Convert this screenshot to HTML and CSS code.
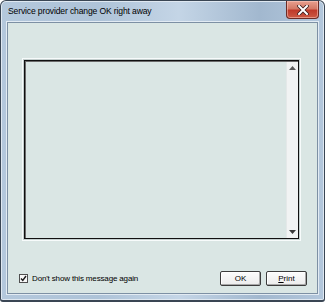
FILE: index.html
```html
<!DOCTYPE html>
<html lang="en">
<head>
    <meta charset="UTF-8">
    <title>Service provider change OK right away</title>
    <link rel="stylesheet" href="styles.css">
</head>
<body>
    <div class="window">
        <div class="titlebar">
            <span class="title">Service provider change OK right away</span>
            <div class="close-btn">
                <svg width="12" height="10" viewBox="0 0 12 10">
                    <path d="M2 1 L10 9 M10 1 L2 9" stroke="#3a1c1c" stroke-width="3.6" stroke-linecap="square"/>
                    <path d="M2 1 L10 9 M10 1 L2 9" stroke="#ffffff" stroke-width="2" stroke-linecap="square"/>
                </svg>
            </div>
        </div>

        <div class="client">
            <div class="textbox">
                <div class="textbox-inner">
                    <div class="text-area"></div>
                    <div class="scrollbar">
                        <div class="scroll-btn">
                            <svg width="7" height="4" viewBox="0 0 7 4"><path d="M0 4 L3.5 0 L7 4 Z" fill="#5a5a5a"/></svg>
                        </div>
                        <div class="scroll-track"></div>
                        <div class="scroll-btn">
                            <svg width="7" height="4" viewBox="0 0 7 4"><path d="M0 0 L3.5 4 L7 0 Z" fill="#3a3a3a"/></svg>
                        </div>
                    </div>
                </div>
            </div>

            <div class="footer">
                <label class="check-label">
                    <span class="checkbox">
                        <svg width="7" height="7" viewBox="0 0 7 7"><path d="M1 3.5 L2.8 5.5 L6 1" stroke="#1a1a1a" stroke-width="1.4" fill="none"/></svg>
                    </span>
                    Don't show this message again
                </label>
                <div class="buttons">
                    <button class="btn">OK</button>
                    <button class="btn"><u>P</u>rint</button>
                </div>
            </div>
        </div>
    </div>
</body>
</html>
```

FILE: styles.css
```css
* {
    box-sizing: border-box;
}

body {
    margin: 0;
    width: 325px;
    height: 302px;
    background: #ffffff;
    font-family: 'Liberation Sans', Arial, sans-serif;
    overflow: hidden;
}

.window {
    width: 325px;
    height: 302px;
    display: flex;
    flex-direction: column;
    border: 1px solid #3a4654;
    border-bottom-width: 2px;
    border-radius: 6px 6px 3px 3px;
    background: linear-gradient(90deg, #b4c8dc 0%, #aec3d8 30%, #c4d5e6 55%, #a2b8cf 80%, #b3c7dc 100%);
    box-shadow: inset 0 0 0 1px #dfe8f1;
}

.titlebar {
    height: 21px;
    display: flex;
    align-items: flex-start;
    padding-left: 7px;
}

.title {
    font-size: 8.6px;
    color: #000;
    margin-top: 5px;
    letter-spacing: -0.15px;
}

.close-btn {
    margin-left: auto;
    margin-right: 5px;
    width: 33px;
    height: 18px;
    display: flex;
    align-items: center;
    justify-content: center;
    border: 1px solid #6b2b25;
    border-top: none;
    border-radius: 0 0 4px 4px;
    background: linear-gradient(180deg, #e8a08f 0%, #d47966 45%, #bf3a2a 55%, #cc5a44 100%);
    box-shadow: inset 0 0 0 1px rgba(255, 210, 200, 0.5);
}

.client {
    flex: 1;
    margin: 0 6px 6px 6px;
    border: 1px solid #7d90a4;
    background: #dae6e4;
    display: flex;
    flex-direction: column;
    box-shadow: 0 0 0 1px #e2ebf3;
}

.textbox {
    margin: 35px 16px 0 14px;
    height: 183px;
    border: 1px solid #f7fbfb;
    padding: 1px;
    background: #c4cfce;
}

.textbox-inner {
    height: 100%;
    border: 1px solid #101010;
    display: flex;
    box-shadow: inset 1px 1px 0 #6a6a6a;
}

.text-area {
    flex: 1;
    background: #dae6e4;
    margin: 1px 0 0 1px;
}

.scrollbar {
    width: 12px;
    display: flex;
    flex-direction: column;
    background: #f1f3f3;
    border-left: 1px solid #e4e8e8;
    margin-top: 1px;
}

.scroll-btn {
    height: 12px;
    display: flex;
    align-items: center;
    justify-content: center;
}

.scroll-track {
    flex: 1;
}

.footer {
    display: flex;
    align-items: center;
    justify-content: space-between;
    padding: 0 10px 0 11px;
    margin-top: 30px;
}

.check-label {
    display: flex;
    align-items: center;
    gap: 4px;
    font-size: 8px;
    color: #000;
    letter-spacing: -0.15px;
}

.checkbox {
    width: 9px;
    height: 9px;
    border: 1px solid #4f4f4f;
    background: #f8f8f8;
    display: flex;
    align-items: center;
    justify-content: center;
}

.buttons {
    display: flex;
    gap: 5px;
}

.btn {
    width: 41px;
    height: 15px;
    padding: 0;
    font-family: 'Liberation Sans', Arial, sans-serif;
    font-size: 8px;
    color: #000;
    background: linear-gradient(180deg, #fcfcfc 0%, #ececec 100%);
    border: 1px solid #3c3c3c;
    border-radius: 2px;
    box-shadow: inset -1px -1px 0 #a8a8a8, inset 1px 1px 0 #ffffff;
}
```
